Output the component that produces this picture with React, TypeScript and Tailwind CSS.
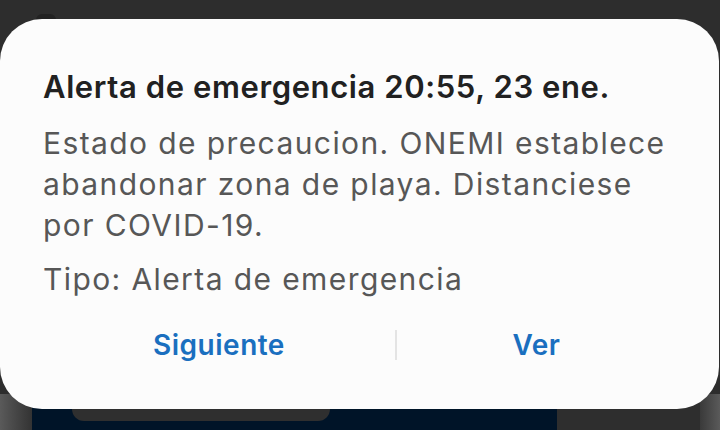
export default function App() {
  return (
    <div className="relative h-[430px] w-[720px] overflow-hidden bg-[#2d2d2d] font-['Inter',sans-serif]">
      {/* app underneath the alert */}
      <div className="absolute left-[36px] top-[14px] h-[12px] w-[20px] rounded-full bg-[#222]" />
      <div className="absolute bottom-0 left-0 flex h-[36px] w-[720px]">
        <div className="w-[32px] bg-gradient-to-r from-[#5a5a5a] to-[#333]" />
        <div className="relative w-[525px] bg-[#001428]">
          <div className="absolute left-[40px] top-0 h-[27px] w-[258px] rounded-b-[12px] bg-[#2f2f2f]" />
        </div>
        <div className="w-[143px] bg-[#2e2e2e] pl-[12px] pt-[2px] text-[7px] font-bold leading-[8px] text-[#111]">
          Pasta, arroz y salsas
        </div>
        <div className="flex-1 bg-gradient-to-r from-[#3a3a3a] to-[#5a5a5a]" />
      </div>

      <div className="absolute left-0 top-[19px] flex h-[390px] w-[719px] flex-col rounded-[42px] bg-[#fcfcfc] px-[43px] pt-[50px]">
        <div className="whitespace-nowrap text-[31px] font-semibold leading-[36px] tracking-[0.6px] text-[#212121]">
          Alerta de emergencia 20:55, 23 ene.
        </div>
        <div className="mt-[18px] whitespace-nowrap text-[30px] leading-[41px] tracking-[1.4px] text-[#575757]">
          Estado de precaucion. ONEMI establece
          <br />
          abandonar zona de playa. Distanciese
          <br />
          por COVID-19.
        </div>
        <div className="mt-[13px] whitespace-nowrap text-[30px] leading-[41px] tracking-[1.4px] text-[#575757]">
          Tipo: Alerta de emergencia
        </div>
        <div className="mt-[27px] flex items-center">
          <div className="w-[352px] text-center text-[28px] font-semibold leading-[36px] tracking-[0.5px] text-[#1a6fbf]">
            Siguiente
          </div>
          <div className="h-[30px] w-[2px] bg-[#e4e4e4]" />
          <div className="flex-1 text-center text-[28px] font-semibold leading-[36px] tracking-[0.5px] text-[#1a6fbf]">
            Ver
          </div>
        </div>
      </div>
    </div>
  );
}
